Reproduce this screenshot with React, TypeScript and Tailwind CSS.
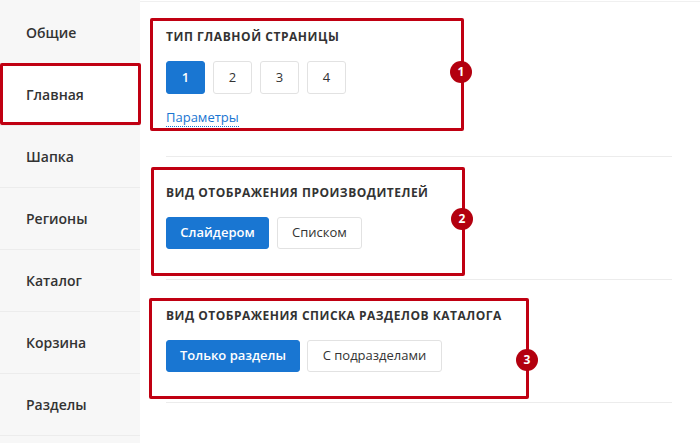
import React from "react";

const font = { fontFamily: '"Open Sans", "Noto Sans", sans-serif' };

const navItems = ["Общие", "Главная", "Шапка", "Регионы", "Каталог", "Корзина", "Разделы"];

function Btn({ active, w, children }: { active?: boolean; w: string; children: React.ReactNode }) {
  return (
    <div
      className={
        "h-[33px] flex items-center justify-center rounded-[3px] text-[13px] " +
        w +
        (active
          ? " bg-[#1976d2] text-white font-semibold border border-[#1976d2]"
          : " bg-white text-[#333] border border-[#e2e2e2]")
      }
    >
      {children}
    </div>
  );
}

function Badge({ n, x, y }: { n: string; x: string; y: string }) {
  return (
    <div
      className={
        "absolute w-[22px] h-[22px] rounded-full bg-[#b3000f] text-white text-[12px] font-bold flex items-center justify-center " +
        x +
        " " +
        y
      }
    >
      {n}
    </div>
  );
}

export default function App() {
  return (
    <div className="relative w-[700px] h-[443px] overflow-hidden bg-white flex" style={font}>
      <div className="w-[140px] shrink-0 bg-[#f7f7f7] pt-[2px]">
        {navItems.map((t) => (
          <div
            key={t}
            className={
              "h-[62px] flex items-center pl-[26px] text-[14px] font-semibold text-[#333] border-b border-[#ececec] " +
              (t === "Главная" ? "bg-white" : "")
            }
          >
            {t}
          </div>
        ))}
      </div>
      <div className="flex-1 pt-[1px]">
        <div className="border-t border-[#f0f0f0]">
          <div className="pl-[26px] pr-[28px]">
            <div className="pt-[27px] pb-[29px] border-b border-[#ececec]">
              <div className="text-[12px] leading-4 font-bold text-[#333] tracking-[0.55px]">ТИП ГЛАВНОЙ СТРАНИЦЫ</div>
              <div className="mt-[16px] flex gap-[8px]">
                <Btn active w="w-[39px]">1</Btn>
                <Btn w="w-[39px]">2</Btn>
                <Btn w="w-[39px]">3</Btn>
                <Btn w="w-[39px]">4</Btn>
              </div>
              <div className="mt-[13px] leading-5 text-[13px]">
                <span className="text-[#1976d2] border-b border-dotted border-[#1976d2]">Параметры</span>
              </div>
            </div>
            <div className="pt-[28px] pb-[30px] border-b border-[#ececec]">
              <div className="text-[12px] leading-4 font-bold text-[#333] tracking-[0.5px]">ВИД ОТОБРАЖЕНИЯ ПРОИЗВОДИТЕЛЕЙ</div>
              <div className="mt-[16px] flex gap-[8px]">
                <Btn active w="w-[103px] !h-[32px]">Слайдером</Btn>
                <Btn w="w-[85px] !h-[32px]">Списком</Btn>
              </div>
            </div>
            <div className="pt-[28px] pb-[30px] border-b border-[#ececec]">
              <div className="text-[12px] leading-4 font-bold text-[#333] tracking-[0.5px]">ВИД ОТОБРАЖЕНИЯ СПИСКА РАЗДЕЛОВ КАТАЛОГА</div>
              <div className="mt-[16px] flex gap-[7px]">
                <Btn active w="w-[134px] !h-[32px]">Только разделы</Btn>
                <Btn w="w-[135px] !h-[32px]">С подразделами</Btn>
              </div>
            </div>
          </div>
        </div>
      </div>

      {/* annotation overlays */}
      <div className="absolute left-0 top-[63px] w-[141px] h-[62px] border-[3px] border-[#c00012] rounded-[2px]" />
      <div className="absolute left-[150px] top-[18px] w-[314px] h-[113px] border-[3px] border-[#c00012] rounded-[2px]" />
      <div className="absolute left-[151px] top-[167px] w-[314px] h-[109px] border-[3px] border-[#c00012] rounded-[2px]" />
      <div className="absolute left-[149px] top-[298px] w-[380px] h-[101px] border-[3px] border-[#c00012] rounded-[2px]" />
      <Badge n="1" x="left-[450px]" y="top-[61px]" />
      <Badge n="2" x="left-[451px]" y="top-[208px]" />
      <Badge n="3" x="left-[516px]" y="top-[349px]" />
    </div>
  );
}
